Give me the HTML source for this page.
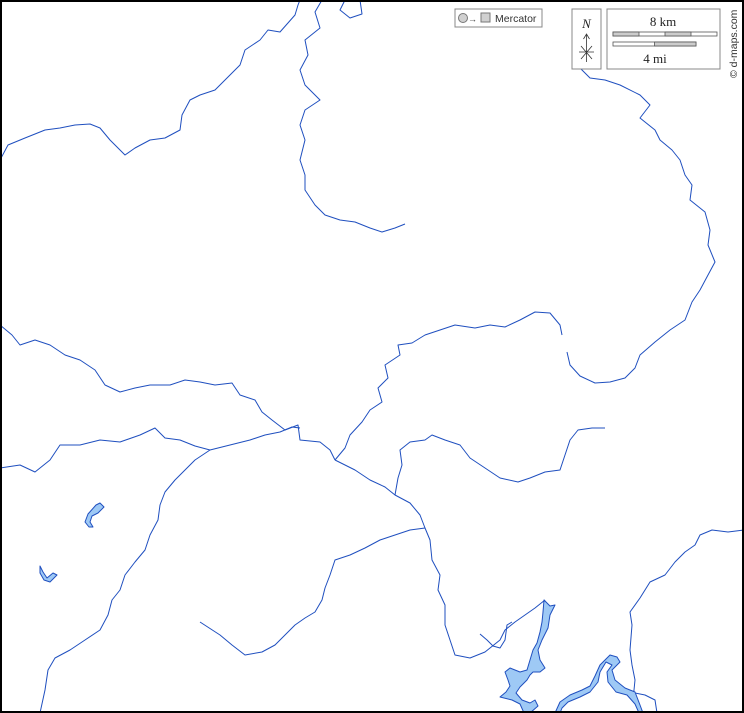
<!DOCTYPE html>
<html><head><meta charset="utf-8"><style>
html,body{margin:0;padding:0;background:#fff}
svg{display:block}
</style></head><body>
<svg width="744" height="713" viewBox="0 0 744 713" xmlns="http://www.w3.org/2000/svg">
<rect x="0" y="0" width="744" height="713" fill="#fff"/>
<g fill="none" stroke="#1f4fbf" stroke-width="1" stroke-linejoin="round">
<path d="M0,160 L8,145 L25,138 L45,130 L60,128 L75,125 L90,124 L100,128 L110,140 L125,155 L135,148 L150,140 L165,138 L180,130 L182,115 L190,100 L200,95 L215,90 L225,80 L240,65 L245,50 L260,40 L268,30 L280,32 L295,15 L298,5 L300,0"/>
<path d="M322,0 L315,12 L320,28 L305,40 L308,55 L300,70 L305,85 L320,100 L305,110 L300,125 L305,140 L300,160 L305,175 L305,190 L315,205 L325,215 L340,220 L355,222 L370,228 L382,232 L395,228 L405,224"/>
<path d="M345,0 L340,10 L350,18 L362,14 L360,0"/>
<path d="M575,55 L580,68 L590,78 L605,80 L620,85 L640,95 L650,105 L640,118 L655,130 L660,140 L672,150 L680,160 L685,175 L692,185 L690,200 L705,212 L710,230 L708,245 L715,262 L708,275 L700,290 L692,302 L685,320 L670,330 L655,342 L640,355 L635,368 L625,378 L610,382 L595,383 L580,376 L570,365 L567,352"/>
<path d="M0,325 L12,335 L20,345 L35,340 L50,345 L65,355 L80,360 L95,370 L105,385 L120,392 L135,388 L150,385 L170,385 L185,380 L200,382 L215,385 L232,383 L240,395 L255,400 L262,412 L272,420 L285,430 L298,425 L300,440 L320,442 L330,450 L335,460"/>
<path d="M0,468 L20,465 L35,472 L50,460 L60,445 L80,445 L100,440 L120,442 L140,435 L155,428 L165,438 L180,440 L195,446 L210,450 L230,445 L250,440 L265,435 L280,432 L292,427 L300,428"/>
<path d="M335,460 L345,448 L350,435 L362,422 L370,410 L382,402 L378,388 L388,378 L385,365 L400,355 L398,345 L412,343 L425,335 L440,330 L455,325 L475,328 L490,325 L505,327 L520,320 L535,312 L550,313 L560,325 L562,335"/>
<path d="M335,460 L355,470 L370,480 L385,487 L395,495 L410,503 L420,515 L425,528 L430,540 L432,560 L440,575 L438,590 L445,605 L445,625 L450,640 L455,655 L470,658 L485,652 L500,640 L505,630 L515,622 L535,608 L545,600"/>
<path d="M395,495 L398,478 L402,465 L400,450 L410,442 L425,440 L432,435 L445,440 L460,445 L470,458 L485,468 L500,478 L518,482 L530,478 L545,472 L560,470 L565,455 L570,440 L578,430 L592,428 L605,428"/>
<path d="M210,450 L195,460 L185,470 L175,480 L165,492 L160,505 L158,520 L150,535 L145,550 L135,562 L125,575 L120,590 L112,600 L108,615 L100,630 L85,640 L70,650 L55,658 L48,670 L45,690 L40,713"/>
<path d="M425,528 L410,530 L395,535 L380,540 L365,548 L350,555 L335,560 L330,575 L325,588 L322,600 L315,612 L305,618 L295,625 L285,635 L275,645 L262,652 L245,655 L232,645 L220,635 L200,622"/>
<path d="M633,700 L635,680 L632,665 L630,650 L632,625 L630,612 L640,598 L650,582 L665,575 L675,562 L685,552 L695,545 L700,535 L712,530 L728,532 L744,530"/>
<path d="M480,634 L487,640 L493,646 L500,648 L505,640 L507,625 L512,622"/>
<path d="M657,713 L655,700 L645,695 L630,692"/>
</g>
<g fill="#9ec9f5" stroke="#1f4fbf" stroke-width="1" stroke-linejoin="round">
<path d="M100,503 L104,507 L98,513 L92,516 L90,522 L93,527 L89,527 L85,522 L88,514 L96,505 Z"/>
<path d="M40,566 L43,572 L47,578 L53,573 L57,575 L50,582 L44,580 L40,573 Z"/>
<path d="M544,600 L550,606 L555,605 L550,615 L548,628 L542,640 L538,650 L540,660 L545,668 L540,672 L533,672 L530,675 L527,680 L520,687 L516,693 L522,700 L530,703 L535,700 L538,706 L530,713 L524,713 L520,704 L512,700 L500,697 L506,692 L510,686 L508,680 L505,672 L510,668 L520,672 L527,670 L530,660 L533,650 L537,643 L540,632 L542,622 L543,612 Z"/>
<path d="M555,713 L560,702 L570,695 L582,690 L590,686 L595,676 L600,665 L610,655 L617,657 L620,662 L612,670 L615,680 L625,688 L635,692 L640,705 L643,713 L639,713 L635,704 L627,695 L616,692 L608,682 L607,672 L612,665 L606,662 L600,672 L598,682 L590,692 L580,697 L568,702 L562,708 L560,713 Z"/>
</g>
<rect x="455" y="9" width="87" height="18" fill="#fff" stroke="#888" stroke-width="1"/>
<circle cx="463" cy="18" r="4.5" fill="#d0d0d0" stroke="#777"/>
<text x="468" y="22" font-family="Liberation Sans, sans-serif" font-size="9" fill="#444">→</text>
<rect x="481" y="13" width="9" height="9" fill="#d0d0d0" stroke="#777"/>
<text x="495" y="22" font-family="Liberation Sans, sans-serif" font-size="10.5" fill="#333">Mercator</text>
<rect x="572" y="9" width="29" height="60" fill="#fff" stroke="#888"/>
<text x="586.5" y="28" text-anchor="middle" font-family="Liberation Serif, serif" font-style="italic" font-size="13" fill="#222">N</text>
<path d="M586.5,62 L586.5,35 M583.5,39 L586.5,34 L589.5,39 M579,52 L594,52 M581,46 L592,59 M592,46 L581,59" stroke="#333" stroke-width="0.8" fill="none"/>
<rect x="607" y="9" width="113" height="60" fill="#fff" stroke="#888"/>
<text x="663" y="26" text-anchor="middle" font-family="Liberation Serif, serif" font-size="13" fill="#222">8 km</text>
<rect x="613" y="32" width="104" height="4" fill="#fff" stroke="#555" stroke-width="0.8"/>
<rect x="613" y="32" width="26" height="4" fill="#ccc" stroke="#555" stroke-width="0.8"/>
<rect x="665" y="32" width="26" height="4" fill="#ccc" stroke="#555" stroke-width="0.8"/>
<rect x="613" y="42" width="83" height="4" fill="#fff" stroke="#555" stroke-width="0.8"/>
<rect x="654.5" y="42" width="41.5" height="4" fill="#ccc" stroke="#555" stroke-width="0.8"/>
<text x="655" y="63" text-anchor="middle" font-family="Liberation Serif, serif" font-size="13" fill="#222">4 mi</text>
<text transform="translate(737,78) rotate(-90)" font-family="Liberation Sans, sans-serif" font-size="10.5" fill="#333">© d-maps.com</text>
<rect x="1" y="1" width="742" height="711" fill="none" stroke="#000" stroke-width="2"/>
</svg>
</body></html>
